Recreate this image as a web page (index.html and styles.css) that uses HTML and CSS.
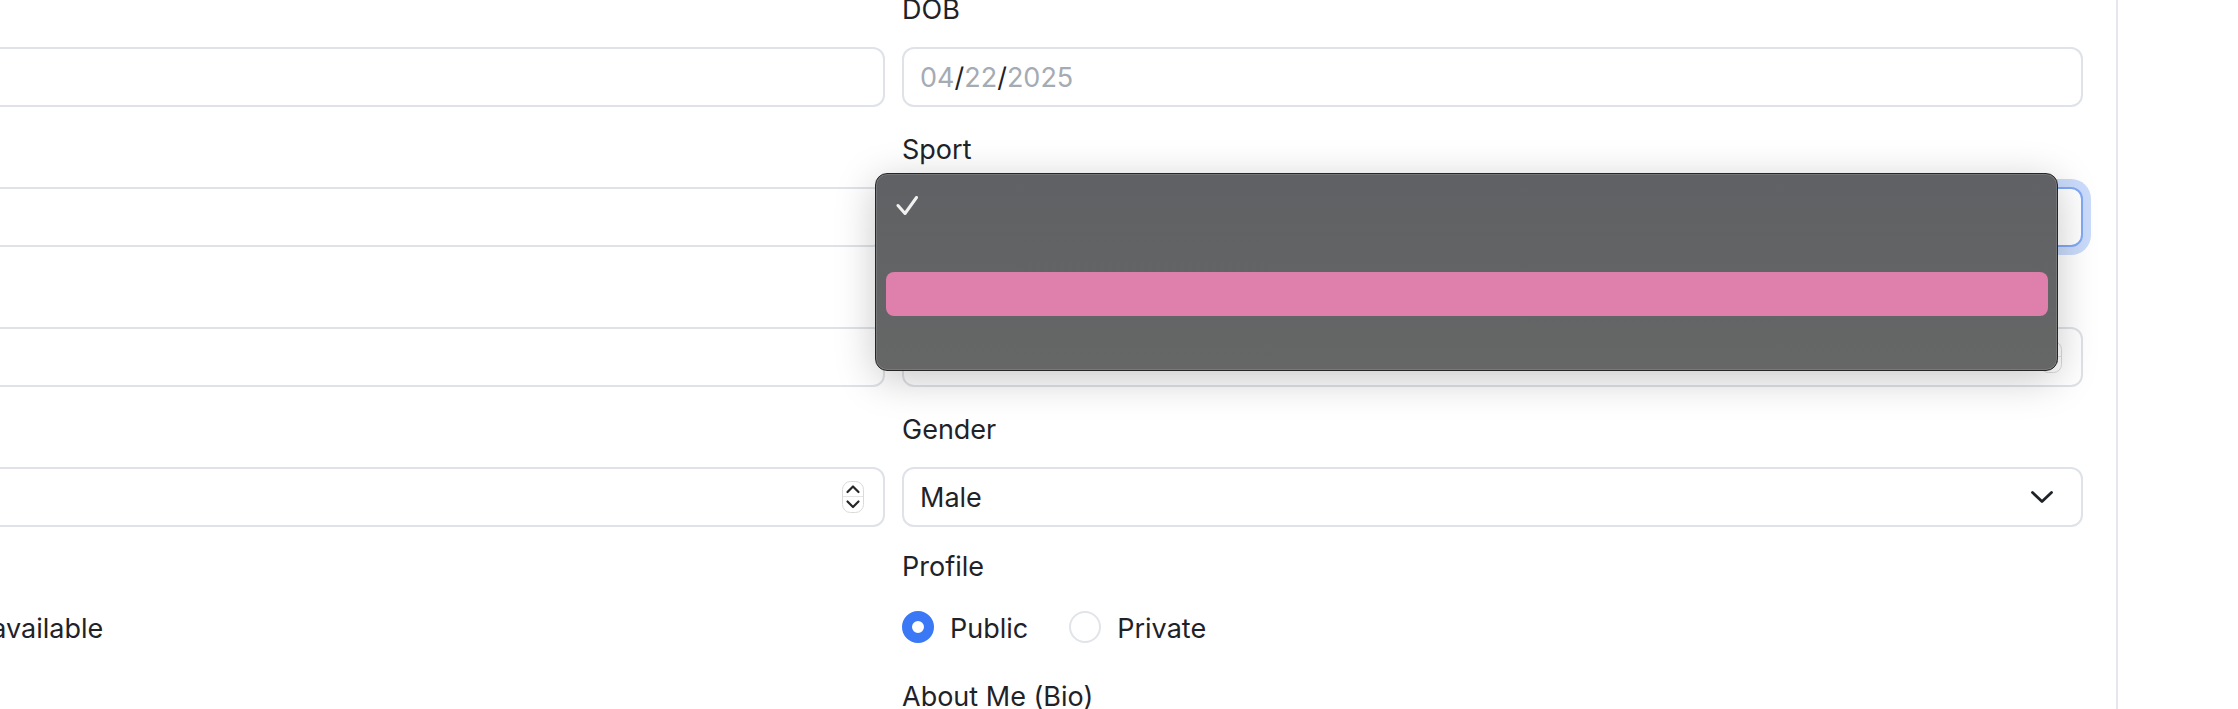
FILE: index.html
```html
<!DOCTYPE html>
<html lang="en">
<head>
<meta charset="utf-8">
<title>Athlete Profile</title>
<link rel="stylesheet" href="styles.css">
</head>
<body>
<div class="panel">
  <form class="form-grid">
    <div class="field">
      <label class="label">Full Name</label>
      <div class="input"></div>
    </div>
    <div class="field">
      <label class="label">DOB</label>
      <div class="input date"><span class="dim">04</span>/<span class="dim">22</span>/<span class="dim">2025</span></div>
    </div>

    <div class="field">
      <label class="label">Email</label>
      <div class="input"></div>
    </div>
    <div class="field">
      <label class="label">Sport</label>
      <div class="select-wrap">
        <div class="input select focused"></div>
        <div class="popup">
          <div class="popup-item">
            <svg class="check" width="22" height="20" viewBox="0 0 22 20"><polyline points="2,9.5 9,17.5 20.5,1.5" fill="none" stroke="#f1f1f1" stroke-width="3" stroke-linecap="round" stroke-linejoin="round"/></svg>
          </div>
          <div class="popup-item"></div>
          <div class="popup-item hl"></div>
          <div class="popup-item"></div>
        </div>
      </div>
    </div>

    <div class="field">
      <label class="label">Phone</label>
      <div class="input"></div>
    </div>
    <div class="field">
      <label class="label">Height (cm)</label>
      <div class="input number">
        <svg class="spinner" width="22" height="32" viewBox="0 0 22 32"><rect x="0.5" y="0.5" width="21" height="31" rx="8" fill="#fff" stroke="#dadada"/><line x1="1" y1="15.5" x2="21" y2="15.5" stroke="#e4e4e4"/><polyline points="5.5,11 11,5.5 16.5,11" fill="none" stroke="#262626" stroke-width="2.2" stroke-linecap="round" stroke-linejoin="round"/><polyline points="5.5,20.5 11,26 16.5,20.5" fill="none" stroke="#262626" stroke-width="2.2" stroke-linecap="round" stroke-linejoin="round"/></svg>
      </div>
    </div>

    <div class="field">
      <label class="label">Weight (kg)</label>
      <div class="input number">
        <svg class="spinner" width="22" height="32" viewBox="0 0 22 32"><rect x="0.5" y="0.5" width="21" height="31" rx="8" fill="#fff" stroke="#dadada"/><line x1="1" y1="15.5" x2="21" y2="15.5" stroke="#e4e4e4"/><polyline points="5.5,11 11,5.5 16.5,11" fill="none" stroke="#262626" stroke-width="2.2" stroke-linecap="round" stroke-linejoin="round"/><polyline points="5.5,20.5 11,26 16.5,20.5" fill="none" stroke="#262626" stroke-width="2.2" stroke-linecap="round" stroke-linejoin="round"/></svg>
      </div>
    </div>
    <div class="field">
      <label class="label">Gender</label>
      <div class="input select"><span>Male</span>
        <svg class="chevron" width="24" height="14" viewBox="0 0 24 14"><polyline points="2.5,2.5 12,11.5 21.5,2.5" fill="none" stroke="#1f2328" stroke-width="2.8" stroke-linecap="round" stroke-linejoin="round"/></svg>
      </div>
    </div>

    <div class="field">
      <label class="label tight">Availability</label>
      <div class="option-row availability">
        <span class="checkbox"></span>
        <span class="option-text">Mark as currently available</span>
      </div>
    </div>
    <div class="field">
      <label class="label tight">Profile</label>
      <div class="option-row radios">
        <span class="option"><span class="radio checked"></span><span class="option-text">Public</span></span>
        <span class="option"><span class="radio"></span><span class="option-text">Private</span></span>
      </div>
    </div>

    <div class="field"></div>
    <div class="field">
      <label class="label">About Me (Bio)</label>
    </div>
  </form>
</div>
</body>
</html>
```

FILE: styles.css
```css
* {
  box-sizing: border-box;
  margin: 0;
  padding: 0;
}

html, body {
  background: #ffffff;
}

body {
  margin: 0;
  overflow: hidden;
  font-family: Inter, "Noto Sans", sans-serif;
  color: #1f2328;
}

.panel {
  width: 2448px;
  margin-left: -330px;
  margin-top: -10px;
  padding: 0 33px 0 34px;
  border-right: 2px solid #e4e7eb;
  min-height: 760px;
}

.form-grid {
  display: grid;
  grid-template-columns: 1181px 1181px;
  column-gap: 17px;
  row-gap: 23px;
}

.label {
  display: block;
  font-size: 27px;
  line-height: 40px;
  margin-bottom: 17px;
}

.label.tight {
  line-height: 32px;
  padding-top: 1px;
  margin-bottom: 0;
}

.input {
  height: 60px;
  border: 2px solid #dfe2e7;
  border-radius: 12px;
  background: #ffffff;
  display: flex;
  align-items: center;
  padding: 0 16px;
  font-size: 27px;
  color: #1f2328;
}

.date .dim {
  color: #a5abb4;
}

.select {
  justify-content: space-between;
  padding-right: 27px;
}

.select-wrap {
  position: relative;
}

.focused {
  border-color: #80a9f6;
  box-shadow: 0 0 0 8px #cadbfb;
}

.number {
  justify-content: flex-end;
  padding-right: 19px;
}

.spinner {
  display: block;
}

.chevron {
  display: block;
}

.popup {
  position: absolute;
  left: -27px;
  top: -14px;
  width: 1183px;
  height: 198px;
  z-index: 5;
  border-radius: 12px;
  border: 1px solid #262626;
  background: linear-gradient(180deg, #5f6164 0%, #636465 60%, #656665 100%);
  box-shadow: inset 0 0 0 1px rgba(255, 255, 255, 0.13), 0 8px 40px rgba(0, 0, 0, 0.22);
  padding: 10px 9px 10px 10px;
}

.popup-item {
  height: 44px;
  border-radius: 8px;
  display: flex;
  align-items: center;
  padding-left: 10px;
}

.popup-item.hl {
  background: #df7fab;
}

.check {
  display: block;
}

.option-row {
  display: flex;
  align-items: center;
  height: 40px;
  margin-top: 24px;
  margin-bottom: 7px;
  gap: 16px;
  font-size: 27px;
}

.availability {
  gap: 24px;
}

.radios {
  gap: 41px;
}

.option {
  display: flex;
  align-items: center;
  gap: 16px;
}

.option-text {
  line-height: 40px;
  padding-top: 3px;
  white-space: nowrap;
}

.radio {
  width: 32px;
  height: 32px;
  border-radius: 50%;
  border: 2px solid #e1e4e8;
  background: #ffffff;
}

.radio.checked {
  border: 10px solid #3a78f5;
}

.checkbox {
  width: 32px;
  height: 32px;
  border-radius: 8px;
  border: 2px solid #e1e4e8;
  flex: none;
}
```
